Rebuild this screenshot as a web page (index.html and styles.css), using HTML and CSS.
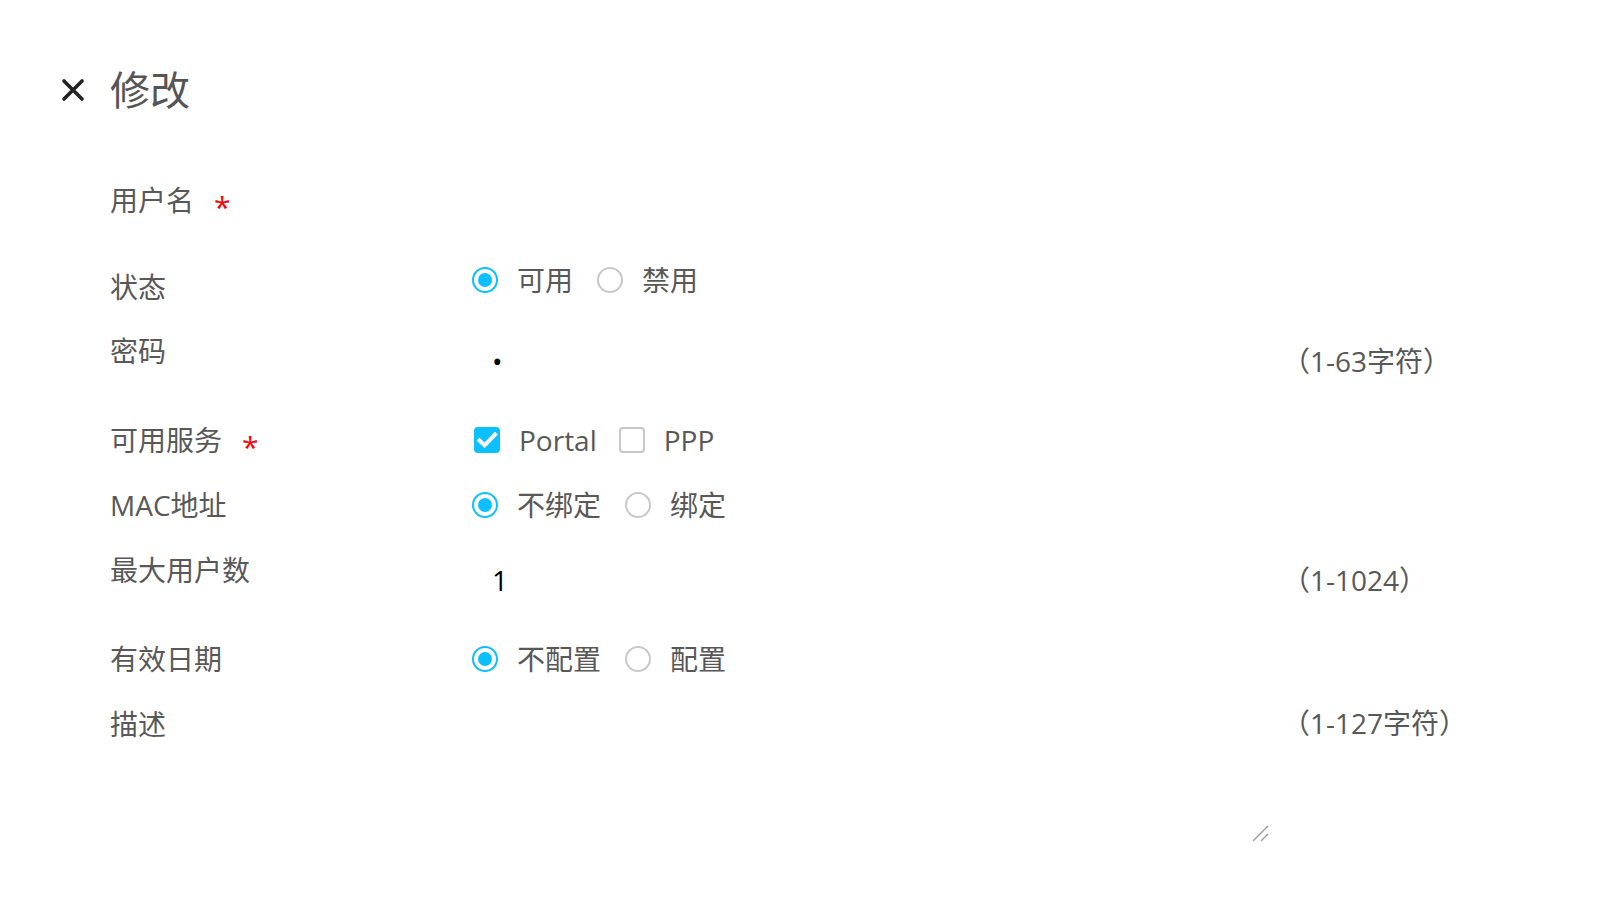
FILE: index.html
```html
<!DOCTYPE html>
<html lang="zh-CN">
<head>
    <meta charset="UTF-8">
    <title>修改</title>
    <link rel="stylesheet" href="styles.css">
</head>
<body>

    <div class="head">
        <svg class="close" viewBox="0 0 24 24" width="24" height="24">
            <path d="M3 3 L21 21 M21 3 L3 21" stroke="#222" stroke-width="3.6" stroke-linecap="round" fill="none"/>
        </svg>
        <h1 class="title">修改</h1>
    </div>

    <form class="form">
        <!-- 用户名 -->
        <div class="row row-user">
            <div class="label">用户名<span class="req">*</span></div>
            <div class="field"><input class="text" type="text"></div>
        </div>

        <!-- 状态 -->
        <div class="row row-status">
            <div class="label">状态</div>
            <div class="field choices">
                <span class="radio on"></span><span class="opt">可用</span>
                <span class="radio"></span><span class="opt">禁用</span>
            </div>
        </div>

        <!-- 密码 -->
        <div class="row row-text">
            <div class="label">密码</div>
            <div class="field"><input class="text" type="password" value="1"></div>
            <div class="hint">（1-63字符）</div>
        </div>

        <!-- 可用服务 -->
        <div class="row row-choice">
            <div class="label">可用服务<span class="req">*</span></div>
            <div class="field choices">
                <span class="check on">
                    <svg viewBox="0 0 26 26" width="26" height="26"><path d="M5.5 13.5 L10.5 18.5 L21 7.5" stroke="#fff" stroke-width="4" fill="none" stroke-linecap="square"/></svg>
                </span><span class="opt opt-check">Portal</span>
                <span class="check"></span><span class="opt">PPP</span>
            </div>
        </div>

        <!-- MAC地址 -->
        <div class="row row-choice">
            <div class="label">MAC地址</div>
            <div class="field choices">
                <span class="radio on"></span><span class="opt">不绑定</span>
                <span class="radio"></span><span class="opt">绑定</span>
            </div>
        </div>

        <!-- 最大用户数 -->
        <div class="row row-text">
            <div class="label">最大用户数</div>
            <div class="field"><input class="text" type="text" value="1"></div>
            <div class="hint">（1-1024）</div>
        </div>

        <!-- 有效日期 -->
        <div class="row row-choice">
            <div class="label">有效日期</div>
            <div class="field choices">
                <span class="radio on"></span><span class="opt">不配置</span>
                <span class="radio"></span><span class="opt">配置</span>
            </div>
        </div>

        <!-- 描述 -->
        <div class="row row-area">
            <div class="label">描述</div>
            <div class="field area-wrap">
                <textarea class="area"></textarea>
                <svg class="grip" viewBox="0 0 18 18" width="18" height="18">
                    <path d="M1 17 L16 2 M9 17 L16 10" stroke="#9a9a9a" stroke-width="1.4" fill="none"/>
                </svg>
            </div>
            <div class="hint hint-area">（1-127字符）</div>
        </div>
    </form>

</body>
</html>
```

FILE: styles.css
```css
body {
    margin: 0;
    padding: 0;
    background-color: #fff;
    color: #585858;
    font-family: "Open Sans", "Noto Sans CJK SC", sans-serif;
}
.head {
    display: flex;
    align-items: center;
    padding: 62px 0 0 61px;
    height: 56px;
}
.close {
    width: 24px;
    height: 24px;
    margin-right: 25px;
}
.title {
    margin: 0;
    font-size: 40px;
    font-weight: normal;
    line-height: 56px;
    color: #555;
}
.form {
    margin-top: 62px;
}
.row {
    display: flex;
    align-items: flex-start;
}
.label {
    width: 362px;
    padding-left: 110px;
    font-size: 28px;
    line-height: 40px;
    white-space: nowrap;
}
.req {
    color: #f00;
    margin-left: 20px;
    font-size: 30px;
    position: relative;
    top: 7px;
}
.field {
    width: 800px;
}
.hint {
    margin-left: 10px;
    font-size: 28px;
    line-height: 40px;
    white-space: nowrap;
}

/* row heights */
.row-user {
    height: 80px;
}
.row-status {
    height: 71px;
}
.row-status .label {
    padding-top: 7px;
}
.row-text {
    height: 89px;
}
.row-text .hint {
    margin-top: 10px;
}
.row-choice {
    height: 65px;
}

/* inputs */
.text {
    display: block;
    width: 100%;
    height: 48px;
    box-sizing: border-box;
    margin-top: -4px;
    padding: 0 0 0 20px;
    border: none;
    outline: none;
    font-family: "Open Sans", "Noto Sans CJK SC", sans-serif;
    font-size: 28px;
    color: #000;
    background: transparent;
}
.row-text .text {
    margin-top: 6px;
}
.area-wrap {
    position: relative;
}
.area {
    display: block;
    width: 800px;
    height: 140px;
    box-sizing: border-box;
    border: none;
    outline: none;
    padding: 0;
    resize: none;
    font-family: "Open Sans", "Noto Sans CJK SC", sans-serif;
    font-size: 28px;
}
.grip {
    position: absolute;
    right: 2px;
    bottom: 2px;
}
.hint-area {
    margin-top: -1px;
}

/* radio / checkbox */
.choices {
    display: flex;
    align-items: center;
    height: 40px;
}
.opt {
    font-size: 28px;
    line-height: 40px;
    margin-right: 24px;
}
.opt-check {
    margin-right: 20px;
}
.radio {
    box-sizing: border-box;
    width: 26px;
    height: 26px;
    border: 2px solid #c8c8c8;
    border-radius: 50%;
    margin-right: 19px;
    position: relative;
}
.radio.on {
    border-color: #0cbfff;
}
.radio.on::after {
    content: "";
    position: absolute;
    left: 4px;
    top: 4px;
    width: 14px;
    height: 14px;
    border-radius: 50%;
    background-color: #0cbfff;
}
.check {
    box-sizing: border-box;
    width: 26px;
    height: 26px;
    border: 2px solid #c8c8c8;
    border-radius: 4px;
    margin-left: 2px;
    margin-right: 19px;
    position: relative;
}
.check.on {
    border: none;
    background-color: #0cbfff;
}
.check svg {
    display: block;
}
```
